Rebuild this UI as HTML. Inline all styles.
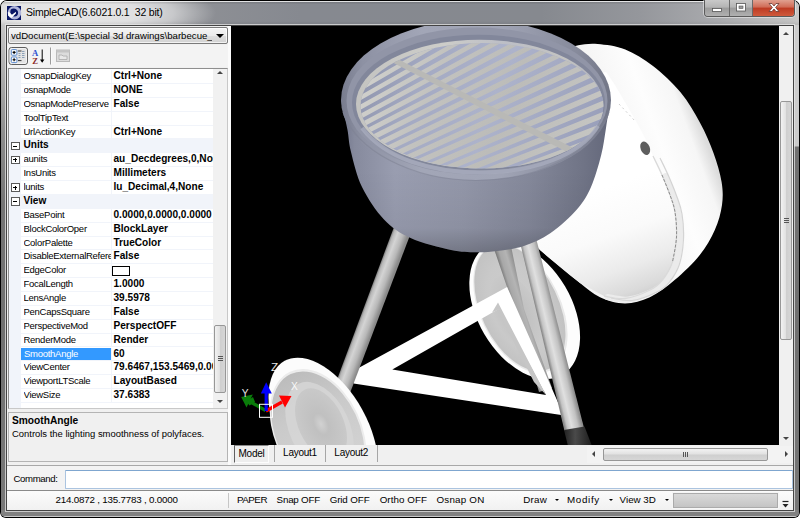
<!DOCTYPE html>
<html lang="en">
<head>
<meta charset="utf-8">
<title>SimpleCAD</title>
<style>
*{box-sizing:border-box;margin:0;padding:0}
html,body{width:800px;height:521px;overflow:hidden;background:#fff}
body{position:relative;font-family:"Liberation Sans",sans-serif;font-size:9.6px;color:#000}
.abs{position:absolute}
#win{position:absolute;left:0;top:0;width:800px;height:518px;border-radius:7px 7px 6px 6px;background:#000;overflow:hidden}
#frame{position:absolute;left:1px;top:1px;right:1px;bottom:1px;border-radius:6px 6px 5px 5px;background:#7b7b7b;overflow:hidden;box-shadow:inset 0 0 0 1px rgba(255,255,255,.55)}
#tbar{position:absolute;left:0;top:0;right:0;height:24px;overflow:hidden;background:linear-gradient(90deg,#a6a6a6 0,#8e9095 190px,#868990 300px,#86898f 540px,#95979c 640px,#aaabae 720px,#c2c2c2 790px,#c8c8c8 100%)}
#tglow{position:absolute;left:-70px;top:-22px;width:285px;height:68px;background:radial-gradient(ellipse closest-side at center,rgba(255,255,255,.74) 0,rgba(255,255,255,.7) 45%,rgba(255,255,255,.5) 70%,rgba(255,255,255,.2) 88%,rgba(255,255,255,0) 100%)}
#tbshine{position:absolute;left:0;top:0;right:0;height:24px;background:linear-gradient(180deg,rgba(0,0,0,.10) 0,rgba(0,0,0,.10) 2px,rgba(0,0,0,0) 3px,rgba(0,0,0,0) 20px,rgba(0,0,0,.08) 100%);box-shadow:inset 0 1px 0 rgba(255,255,255,.78)}
#lside{position:absolute;left:0;top:24px;width:6px;bottom:0;background:linear-gradient(180deg,#c6c6c6 0,#b0b0b0 40px,#8c8c8c 110px,#747474 180px,#707070 300px,#787878 100%)}
#rside{position:absolute;right:0;top:24px;width:6px;bottom:0;background:linear-gradient(180deg,#cdcdcd 0,#cbcbcb 121px,#727272 122px,#707070 300px,#787878 100%)}
#bside{position:absolute;left:0;right:0;bottom:0;height:7px;background:#818181;border-bottom:1px solid #c9c9c9}
#inner{position:absolute;left:6px;top:25px;width:788px;height:486px;background:#444;box-shadow:0 0 0 1px rgba(232,232,232,.72)}
#client{position:absolute;left:7px;top:26px;width:786px;height:484px;background:#f0f0f0;overflow:hidden}
#title{position:absolute;left:26px;top:5px;font-size:10.5px;letter-spacing:-.2px;line-height:14px;white-space:nowrap;color:#000;text-shadow:0 0 4px rgba(255,255,255,.5)}
#appicon{position:absolute;left:6px;top:5px;width:16px;height:16px;background:#e4e4e4}
/* caption buttons */
#cap{position:absolute;left:704px;top:0;width:91px;height:17px;border:1px solid #5a5a5a;border-top:none;border-radius:0 0 4px 4px;overflow:hidden;box-shadow:0 0 0 1px rgba(255,255,255,.45)}
#cap div{position:absolute;top:0;height:16px}
#bmin{left:0;width:25px;background:linear-gradient(180deg,#c9c9c9 0,#b4b4b4 45%,#9b9b9b 50%,#b0b0b0 100%);border-right:1px solid #6a6a6a}
#bmax{left:25px;width:23px;background:linear-gradient(180deg,#c9c9c9 0,#b4b4b4 45%,#9b9b9b 50%,#b0b0b0 100%);border-right:1px solid #6a6a6a}
#bcls{left:48px;width:42px;background:linear-gradient(180deg,#e0a090 0,#d06a55 45%,#bd3a22 50%,#cf5a3c 100%)}
/* left panel */
#lp{position:absolute;left:0;top:0;width:221px;height:439px;background:#f0f0f0}
#combo{position:absolute;left:1px;top:1px;width:220px;height:17px;border:1px solid #7a7a7a;border-radius:2px;background:linear-gradient(180deg,#f4f4f4 0,#ebebeb 50%,#dedede 52%,#d2d2d2 100%);box-shadow:inset 0 0 0 1px rgba(255,255,255,.7)}
#combo span{position:absolute;left:2px;top:1.5px;font-size:9.65px;line-height:12px;white-space:nowrap;width:201px;overflow:hidden}
#combo i{position:absolute;right:3.5px;top:6px;width:0;height:0;border:4px solid transparent;border-top:4.5px solid #000;border-bottom:0}
#tb{position:absolute;left:0;top:19px;width:222px;height:22px;background:#f3f3f3}
#grid{position:absolute;left:1px;top:41.5px;width:220px;height:341px;background:#fff;border:1px solid #9a9a9a;border-color:#8e8e8e #c8c8c8 #c8c8c8 #8e8e8e;overflow:hidden}
#gut{position:absolute;left:0;top:0;width:11.5px;height:100%;background:#f1f4fa}
.r{position:absolute;left:0;width:204px;height:13.87px;border-bottom:1px solid #f1f4fa;white-space:nowrap}
.r .n{position:absolute;left:14.5px;top:0;width:87px;height:13px;line-height:12.6px;overflow:hidden;font-size:9.5px;letter-spacing:-.27px;padding-left:0}
.r .v{position:absolute;left:102px;top:0;width:102.5px;height:13px;line-height:12.6px;overflow:hidden;font-weight:bold;font-size:10.1px;padding-left:1.5px;border-left:1px solid #f1f4fa}
.r.cat{background:#f1f4fa}
.r.cat .n{font-weight:bold;overflow:visible;font-size:10.1px;letter-spacing:0}
.r.cat .v{border-left:none}
.r.sel .n{background:#3399ff;color:#fff;left:11.5px;padding-left:3.5px;width:90px;height:12.8px}
.bx{position:absolute;left:1.5px;top:2.2px;width:9px;height:8.8px;border:1px solid #5a5a5a;background:#fff}
.bx:before{content:"";position:absolute;left:1.5px;top:2.9px;width:4px;height:1px;background:#000}
.bx:after{content:"";position:absolute;left:3px;top:1.4px;width:1px;height:4px;background:#000}
.bx.m:after{display:none}
.sw{position:absolute;left:0px;top:1.8px;width:17.5px;height:9.5px;border:1px solid #000;background:#fff}
#gsb{position:absolute;left:204px;top:0;width:14px;height:100%;background:#f1f1f1}
#gthumb{position:absolute;left:1px;top:256px;width:12px;height:68.5px;border:1px solid #979797;border-radius:2px;background:linear-gradient(90deg,#f2f2f2 0,#e2e2e2 45%,#cfcfcf 55%,#d6d6d6 100%)}
.grip{position:absolute;left:2.5px;width:5px;height:1px;background:#555}
.arr{position:absolute;width:0;height:0;border:3px solid transparent}
#desc{position:absolute;left:0.5px;top:385.5px;width:220.5px;height:50.5px;border:1px solid #b4b4b4;background:#f0f0f0}
#desc b{position:absolute;left:3.5px;top:2px;font-size:10.2px;line-height:12px}
#desc span{position:absolute;left:3.5px;top:15.5px;font-size:9.43px;line-height:12px;white-space:nowrap}
/* viewport */
#vp{position:absolute;left:224px;top:0;width:548px;height:419px;background:#000;overflow:hidden}
#vsb{position:absolute;left:772px;top:0;width:14px;height:419px;background:#f0f0f0}
#vthumb{position:absolute;left:.5px;top:74.5px;width:12.5px;height:239px;border:1px solid #979797;border-radius:2px;background:linear-gradient(90deg,#f2f2f2 0,#e2e2e2 45%,#cfcfcf 55%,#d6d6d6 100%)}
#tabs{position:absolute;left:225px;top:419px;width:561px;height:19px;background:#f0f0f0}
.tab{position:absolute;top:0;height:17px;font-size:10px;letter-spacing:-.25px;line-height:16px;text-align:center;border:1px solid #9a9a9a;border-top:none;background:#f3f3f3}
#hsb{position:absolute;left:355px;top:1px;width:206px;height:16.5px;background:#f3f3f3}
#hthumb{position:absolute;left:16px;top:1.5px;width:164.5px;height:13px;border:1px solid #979797;border-radius:2px;background:linear-gradient(180deg,#f2f2f2 0,#e2e2e2 45%,#cfcfcf 55%,#d6d6d6 100%)}
/* command */
#sepline{position:absolute;left:0;top:438.5px;width:786px;height:1px;background:#a8a8a8}
#cmd{position:absolute;left:0;top:440px;width:786px;height:24px;background:#f3f3f3}
#cmd span{position:absolute;left:6.5px;top:6.5px;font-size:9.6px;letter-spacing:-.35px;line-height:12px}
#cmd div{position:absolute;left:57.5px;top:4px;width:728px;height:18.5px;border:1px solid #abc4e0;border-top-color:#7fa6cf;background:#fff;border-radius:1px}
#status{position:absolute;left:0;top:464px;width:786px;height:20px;background:linear-gradient(180deg,#fbfbfb 0,#f1f1f1 100%);border-top:1px solid #8a8a8a}
#status span{position:absolute;top:3px;font-size:9.8px;line-height:12px;white-space:nowrap}
#prog{position:absolute;left:666px;top:1.5px;width:105px;height:15.5px;border:1px solid #ababab;background:linear-gradient(180deg,#d9d9d9 0,#cfcfcf 50%,#c4c4c4 100%);box-shadow:0 0 0 1px #f6f6f6}
.dd{position:absolute;top:8px;width:0;height:0;border:2.2px solid transparent;border-top:2.6px solid #000;border-bottom:0}
</style>
</head>
<body>
<div id="win">
 <div id="frame"><div id="lside"></div><div id="rside"></div><div id="bside"></div><div id="tbar"><div id="tglow"></div></div><div id="tbshine"></div></div>
 <div id="appicon">
  <svg width="16" height="16" viewBox="0 0 16 16"><rect x="1" y="1" width="14" height="14" fill="#0a1766"/><circle cx="8.500" cy="7.800" r="5.200" fill="none" stroke="#b0b5da" stroke-width="3.200"/><circle cx="7.600" cy="6.900" r="3.300" fill="#0a1766"/><path d="M2 7 L3.600 7.500 L5.900 9.800 L10 6.800 L9.900 8.500 L5.500 12.900 L2.200 10.800Z" fill="#fff"/></svg>
 </div>
 <div id="title">SimpleCAD(6.6021.0.1&nbsp; 32 bit)</div>
 <div id="cap">
  <div id="bmin"><svg width="25" height="16"><rect x="7.5" y="8.5" width="9" height="3" fill="#fff" stroke="#555" stroke-width=".8"/></svg></div>
  <div id="bmax"><svg width="23" height="16"><rect x="6.5" y="3.5" width="9" height="7.5" fill="#fff" stroke="#555" stroke-width=".8"/><rect x="9" y="6" width="4" height="2.5" fill="#9a9a9a" stroke="#555" stroke-width=".6"/></svg></div>
  <div id="bcls"><svg width="42" height="16"><path d="M16 3.5 L19 3.5 L21 6 L23 3.5 L26 3.5 L22.6 7.5 L26 11.5 L23 11.5 L21 9 L19 11.5 L16 11.5 L19.4 7.5Z" fill="#fff" stroke="#6a3a34" stroke-width=".8"/></svg></div>
 </div>
 <div id="inner"></div>
 <div id="client">
  <div id="lp">
   <div id="combo"><span>vdDocument(E:\special 3d drawings\barbecue_3</span><i></i></div>
   <div id="tb">
    <svg width="80" height="22" viewBox="0 0 80 22">
     <rect x="2" y="2.5" width="18.5" height="17" rx="2.5" fill="#e3e3e3" stroke="#5e5e5e" stroke-width="1"/>
     <rect x="3" y="3.5" width="16.5" height="15" rx="2" fill="none" stroke="#f8f8f8" stroke-width=".8"/>
     <rect x="4.3" y="4.6" width="5.6" height="5.6" rx="1" fill="#fff" stroke="#5a8ad0" stroke-width="1"/>
     <rect x="4.3" y="12" width="5.6" height="5.6" rx="1" fill="#fff" stroke="#5a8ad0" stroke-width="1"/>
     <path d="M5.6 7.4h3M7.1 5.9v3M5.6 14.8h3M7.1 13.3v3" stroke="#000" stroke-width="1.1"/>
     <path d="M11 6h3.5M11 15.6h3.5" stroke="#333" stroke-width="1"/>
     <path d="M11.5 8.5h2M15 8.500h2.500M11.5 10.5h2M15 10.500h2.500M11.5 12.500h2M15 12.500h2.500M15 6.500h2.500" stroke="#8aa0b8" stroke-width="1"/>
     <text x="25" y="11" font-family="Liberation Serif,serif" font-weight="bold" font-size="8.600" fill="#2a4fd0">A</text>
     <text x="25.300" y="18.500" font-family="Liberation Serif,serif" font-weight="bold" font-size="8.600" fill="#8c2a2a">Z</text>
     <path d="M35.2 4.5v12" stroke="#000" stroke-width="1"/><path d="M33 14.500h4.400l-2.200 3.300z" fill="#000"/>
     <rect x="43" y="2.5" width="1" height="17" fill="#9c9c9c"/><rect x="44" y="2.5" width="1" height="17" fill="#fafafa"/>
     <rect x="49.500" y="5" width="13" height="11.500" fill="#dcdcdc" stroke="#b9b9b9" stroke-width="1"/>
     <rect x="49.500" y="5" width="13" height="2.500" fill="#c4c4c4"/>
     <path d="M52 12.500v-2.500h3l1 1h4v3.500h-8z" fill="#e8e8e8" stroke="#b0b0b0" stroke-width=".9"/>
    </svg>
   </div>
   <div id="grid">
    <div id="gut"></div>
<div class="r" style="top:1.60px"><span class="n">OsnapDialogKey</span><span class="v">Ctrl+None</span></div>
<div class="r" style="top:15.47px"><span class="n">osnapMode</span><span class="v">NONE</span></div>
<div class="r" style="top:29.34px"><span class="n">OsnapModePreserve</span><span class="v">False</span></div>
<div class="r" style="top:43.21px"><span class="n">ToolTipText</span><span class="v"></span></div>
<div class="r" style="top:57.08px"><span class="n">UrlActionKey</span><span class="v">Ctrl+None</span></div>
<div class="r cat" style="top:70.95px"><i class="bx m"></i><span class="n">Units</span><span class="v"></span></div>
<div class="r" style="top:84.82px"><i class="bx"></i><span class="n">aunits</span><span class="v">au_Decdegrees,0,None</span></div>
<div class="r" style="top:98.69px"><span class="n">InsUnits</span><span class="v">Millimeters</span></div>
<div class="r" style="top:112.56px"><i class="bx"></i><span class="n">lunits</span><span class="v">lu_Decimal,4,None</span></div>
<div class="r cat" style="top:126.43px"><i class="bx m"></i><span class="n">View</span><span class="v"></span></div>
<div class="r" style="top:140.30px"><span class="n">BasePoint</span><span class="v">0.0000,0.0000,0.0000</span></div>
<div class="r" style="top:154.17px"><span class="n">BlockColorOper</span><span class="v">BlockLayer</span></div>
<div class="r" style="top:168.04px"><span class="n">ColorPalette</span><span class="v">TrueColor</span></div>
<div class="r" style="top:181.91px"><span class="n">DisableExternalReferences</span><span class="v">False</span></div>
<div class="r" style="top:195.78px"><span class="n">EdgeColor</span><span class="v"><i class="sw"></i></span></div>
<div class="r" style="top:209.65px"><span class="n">FocalLength</span><span class="v">1.0000</span></div>
<div class="r" style="top:223.52px"><span class="n">LensAngle</span><span class="v">39.5978</span></div>
<div class="r" style="top:237.39px"><span class="n">PenCapsSquare</span><span class="v">False</span></div>
<div class="r" style="top:251.26px"><span class="n">PerspectiveMod</span><span class="v">PerspectOFF</span></div>
<div class="r" style="top:265.13px"><span class="n">RenderMode</span><span class="v">Render</span></div>
<div class="r sel" style="top:279.00px"><span class="n">SmoothAngle</span><span class="v">60</span></div>
<div class="r" style="top:292.87px"><span class="n">ViewCenter</span><span class="v">79.6467,153.5469,0.0000</span></div>
<div class="r" style="top:306.74px"><span class="n">ViewportLTScale</span><span class="v">LayoutBased</span></div>
<div class="r" style="top:320.61px"><span class="n">ViewSize</span><span class="v">37.6383</span></div>
    <div id="gsb">
     <div class="arr" style="left:4.200px;top:2px;border-bottom:3.500px solid #444;border-top:0"></div>
     <div id="gthumb"><i class="grip" style="top:30.5px"></i><i class="grip" style="top:32.5px"></i><i class="grip" style="top:34.5px"></i></div>
     <div class="arr" style="left:4.200px;top:331px;border-top:3.500px solid #444;border-bottom:0"></div>
    </div>
   </div>
   <div id="desc"><b>SmoothAngle</b><span>Controls the lighting smoothness of polyfaces.</span></div>
  </div>
  <div class="abs" style="left:221px;top:0;width:3px;height:439px;background:#fbfbfb"></div>
  <div id="vp">
<svg id="scene" width="548" height="419" viewBox="231 26 548 419">
<defs>
<linearGradient id="gBowl" x1="341" y1="0" x2="610" y2="0" gradientUnits="userSpaceOnUse">
<stop offset="0" stop-color="#70748a"/><stop offset=".05" stop-color="#868a9d"/><stop offset=".2" stop-color="#999db0"/><stop offset=".45" stop-color="#9397a9"/><stop offset=".7" stop-color="#84889a"/><stop offset=".9" stop-color="#707486"/><stop offset="1" stop-color="#63677a"/></linearGradient>
<linearGradient id="gBowlV" x1="0" y1="170" x2="0" y2="253" gradientUnits="userSpaceOnUse">
<stop offset="0" stop-color="#000" stop-opacity="0"/><stop offset=".7" stop-color="#000" stop-opacity=".05"/><stop offset="1" stop-color="#000" stop-opacity=".22"/></linearGradient>
<linearGradient id="gRim" x1="341" y1="0" x2="610" y2="0" gradientUnits="userSpaceOnUse">
<stop offset="0" stop-color="#787c8e"/><stop offset=".08" stop-color="#8d91a3"/><stop offset=".3" stop-color="#a2a6b7"/><stop offset=".6" stop-color="#a0a4b5"/><stop offset=".88" stop-color="#868a9b"/><stop offset="1" stop-color="#727687"/></linearGradient>
<linearGradient id="gGrate" x1="360" y1="60" x2="600" y2="150" gradientUnits="userSpaceOnUse">
<stop offset="0" stop-color="#8c92aa"/><stop offset=".25" stop-color="#a4aac3"/><stop offset=".55" stop-color="#adb3cb"/><stop offset="1" stop-color="#989eb9"/></linearGradient>
<linearGradient id="gBars" x1="360" y1="60" x2="600" y2="150" gradientUnits="userSpaceOnUse">
<stop offset="0" stop-color="#d2d2ce"/><stop offset=".3" stop-color="#c2c2bf"/><stop offset=".6" stop-color="#bcbcb9"/><stop offset="1" stop-color="#c6c6c3"/></linearGradient>
<linearGradient id="gLeg" x1="394" y1="227" x2="409" y2="232.600" gradientUnits="userSpaceOnUse"><stop offset="0" stop-color="#7e7e7e"/><stop offset=".12" stop-color="#b8b8b8"/><stop offset=".35" stop-color="#d4d4d4"/><stop offset=".7" stop-color="#b8b8b8"/><stop offset="1" stop-color="#8a8a8a"/></linearGradient>
<linearGradient id="gLegR" x1="519.500" y1="240" x2="536.500" y2="235.900" gradientUnits="userSpaceOnUse"><stop offset="0" stop-color="#8a8a8a"/><stop offset=".15" stop-color="#c4c4c4"/><stop offset=".4" stop-color="#e0e0e0"/><stop offset=".75" stop-color="#c2c2c2"/><stop offset="1" stop-color="#8e8e8e"/></linearGradient>
<linearGradient id="gLegB" x1="493" y1="246" x2="509.500" y2="241" gradientUnits="userSpaceOnUse"><stop offset="0" stop-color="#747474"/><stop offset=".25" stop-color="#a8a8a8"/><stop offset=".6" stop-color="#b4b4b4"/><stop offset="1" stop-color="#888888"/></linearGradient>
<linearGradient id="gFoot" x1="0" y1="0" x2="1" y2="0">
<stop offset="0" stop-color="#222"/><stop offset=".4" stop-color="#4a4a4a"/><stop offset="1" stop-color="#1c1c1c"/></linearGradient>
<radialGradient id="gFace" cx=".5" cy=".5" r=".6"><stop offset="0" stop-color="#cecece"/><stop offset=".6" stop-color="#c9c9c9"/><stop offset="1" stop-color="#bebebe"/></radialGradient>
<linearGradient id="gFace2" x1="0" y1="0" x2="1" y2="0"><stop offset="0" stop-color="#bcbcbc"/><stop offset=".35" stop-color="#cacaca"/><stop offset="1" stop-color="#d6d6d6"/></linearGradient>
<radialGradient id="gHub" cx=".5" cy=".5" r=".5"><stop offset="0" stop-color="#d2d2d2"/><stop offset=".3" stop-color="#c0c0c0"/><stop offset="1" stop-color="#c9c9c9"/></radialGradient>
<linearGradient id="gLid" x1="600" y1="120" x2="700" y2="290" gradientUnits="userSpaceOnUse">
<stop offset="0" stop-color="#fff"/><stop offset=".7" stop-color="#fbfbfb"/><stop offset="1" stop-color="#e9e9e9"/></linearGradient>
<linearGradient id="gLidBand" x1="640" y1="215" x2="722" y2="185" gradientUnits="userSpaceOnUse">
<stop offset="0" stop-color="#f4f4f4"/><stop offset=".5" stop-color="#fdfdfd"/><stop offset=".85" stop-color="#f6f6f6"/><stop offset="1" stop-color="#dcdcdc"/></linearGradient>
<linearGradient id="gLidIn" x1="612" y1="185" x2="652" y2="296" gradientUnits="userSpaceOnUse">
<stop offset="0" stop-color="#fff"/><stop offset=".4" stop-color="#fafafa"/><stop offset=".7" stop-color="#ebebeb"/><stop offset=".9" stop-color="#dadada"/><stop offset="1" stop-color="#cacaca"/></linearGradient>
<clipPath id="cGrate"><ellipse cx="482" cy="105.800" rx="121.500" ry="62.700"/></clipPath>
<linearGradient id="gWall" x1="360" y1="0" x2="600" y2="0" gradientUnits="userSpaceOnUse"><stop offset="0" stop-color="#c4c4c1"/><stop offset=".35" stop-color="#cdcdc9"/><stop offset=".6" stop-color="#bcbec6"/><stop offset=".85" stop-color="#c4c4c2"/><stop offset="1" stop-color="#b0b3bf"/></linearGradient>
<clipPath id="cInner"><ellipse cx="479" cy="103" rx="124.500" ry="65.500"/></clipPath>
</defs>
<rect x="231" y="26" width="548" height="419" fill="#000"/>
<ellipse cx="524.7" cy="310.3" rx="74.7" ry="46.9" fill="#fdfdfd" transform="rotate(59.6 524.7 310.3)"/>
<ellipse cx="520.4" cy="308.400" rx="69" ry="40.300" fill="#e9e9e9" transform="rotate(64 520.4 308.400)"/>
<ellipse cx="519.9" cy="307.9" rx="67.5" ry="38.8" fill="url(#gFace)" transform="rotate(64.4 519.9 307.9)"/>
<ellipse cx="516" cy="312" rx="40" ry="22" fill="url(#gHub)" transform="rotate(64.4 516 312)"/>
<path d="M566.0 50.0C568.0 49.2 573.0 46.3 578.3 45.3C583.6 44.3 589.8 43.3 597.6 44.0C605.4 44.7 616.1 45.8 625.3 49.5C634.5 53.2 643.8 58.9 653.0 66.0C662.2 73.1 672.7 82.8 680.5 92.3C688.3 101.8 694.5 112.6 700.0 122.7C705.5 132.8 709.9 143.1 713.5 153.0C717.1 162.9 720.2 173.3 721.6 182.0C723.0 190.7 723.1 197.0 722.0 205.0C720.9 213.0 718.5 221.7 714.8 230.0C711.1 238.3 706.4 246.6 699.8 254.9C693.1 263.2 683.2 272.7 674.9 279.8C666.6 286.9 658.2 293.4 649.9 297.3C641.6 301.2 633.3 303.5 625.0 303.5C616.7 303.5 607.5 300.7 600.0 297.3C592.5 293.9 586.7 288.1 580.0 283.0C573.3 277.9 566.7 272.5 560.0 267.0C553.3 261.5 545.3 254.8 540.0 250.0C534.7 245.2 530.0 240.0 528.0 238.0 L520 200 L560 80 Z" fill="url(#gLidBand)"/>
<path d="M606.0 72.0C607.2 73.7 610.3 77.8 613.0 82.0C615.7 86.2 618.7 91.3 622.0 97.0C625.3 102.7 629.2 109.2 633.0 116.0C636.8 122.8 641.7 131.3 645.0 138.0C648.3 144.7 650.2 149.8 653.0 156.0C655.8 162.2 659.2 168.5 662.0 175.0C664.8 181.5 667.8 188.8 670.0 195.0C672.2 201.2 673.9 205.0 675.0 212.0C676.1 219.0 676.9 228.7 676.5 237.0C676.1 245.3 674.8 254.8 672.5 262.0C670.2 269.2 666.2 275.3 662.5 280.0C658.8 284.7 656.2 286.9 650.0 290.0C643.8 293.1 632.7 297.5 625.0 298.5C617.3 299.5 607.5 296.4 604.0 296.0 L580 283 L540 250 L520 200 L560 80 Z" fill="url(#gLidIn)"/>
<path d="M662.0 175.0C663.3 178.3 667.8 188.8 670.0 195.0C672.2 201.2 673.9 205.0 675.0 212.0C676.1 219.0 676.9 228.7 676.5 237.0C676.1 245.3 674.8 254.8 672.5 262.0C670.2 269.2 666.2 275.3 662.5 280.0C658.8 284.7 656.2 286.9 650.0 290.0C643.8 293.1 632.7 297.5 625.0 298.5C617.3 299.5 607.5 296.4 604.0 296.0" fill="none" stroke="#ebebeb" stroke-width="6" transform="translate(3.500 1)" stroke-linecap="round"/>
<path d="M653.0 156.0C654.5 159.2 659.2 168.5 662.0 175.0C664.8 181.5 667.8 188.8 670.0 195.0C672.2 201.2 673.9 205.0 675.0 212.0C676.1 219.0 676.9 228.7 676.5 237.0C676.1 245.3 674.8 254.8 672.5 262.0C670.2 269.2 666.2 275.3 662.5 280.0C658.8 284.7 656.2 286.9 650.0 290.0C643.8 293.1 632.7 297.5 625.0 298.5C617.3 299.5 607.5 296.4 604.0 296.0" fill="none" stroke="#d4d4d4" stroke-width="1.200" transform="translate(7 2)"/>
<path d="M653.0 156.0C654.5 159.2 659.2 168.5 662.0 175.0C664.8 181.5 667.8 188.8 670.0 195.0C672.2 201.2 673.9 205.0 675.0 212.0C676.1 219.0 676.9 228.7 676.5 237.0C676.1 245.3 674.8 254.8 672.5 262.0C670.2 269.2 666.2 275.3 662.5 280.0C658.8 284.7 656.2 286.9 650.0 290.0C643.8 293.1 632.7 297.5 625.0 298.5C617.3 299.5 607.5 296.4 604.0 296.0" fill="none" stroke="#dadada" stroke-width="1.300"/>
<path d="M662.0 175.0C663.3 178.3 667.8 188.8 670.0 195.0C672.2 201.2 673.9 205.0 675.0 212.0C676.1 219.0 676.9 228.7 676.5 237.0C676.1 245.3 673.2 257.8 672.5 262.0" fill="none" stroke="#8c8c8c" stroke-width="1" stroke-dasharray="3 1.500"/>
<path d="M619 104 L636 122" stroke="#cfcfcf" stroke-width="1" stroke-dasharray="2 3"/>
<ellipse cx="645.2" cy="148.2" rx="4.600" ry="7" transform="rotate(-22 645.2 148.2)" fill="#5e5e5e"/>
<path d="M493 246 L511 246 L524 309 L552 388 L539 392 L513.500 306 Z" fill="url(#gLegB)"/>
<path d="M353.5 372.500 L357.6 368.400 L507.1 286.900 L562.9 413.500 L562.9 415.200 L353.500 383.600 Z M392.3 369.600 L546 395 L499.5 308.500 Z" fill="#fff" fill-rule="evenodd"/>
<path d="M498 302.500 L492 312.500 L499.800 309 L500.500 316 L534 382 L546 395 Z" fill="#c6c6c6"/>
<path d="M394 227 L409.500 236.500 L350 393 L335 385 Z" fill="url(#gLeg)"/>
<path d="M519.500 240 L536.500 240 L584 428 L564.500 431 Z" fill="url(#gLegR)"/>
<path d="M564 430 L584.500 426.500 L592 446 L568 446 Z" fill="url(#gFoot)"/>
<path d="M341.0 100.0C341.4 102.0 342.4 107.0 343.5 112.0C344.6 117.0 346.2 123.3 347.5 130.0C348.8 136.7 348.6 142.5 351.0 152.0C353.4 161.5 356.5 175.8 362.0 187.0C367.5 198.2 375.9 211.0 384.0 219.5C392.1 228.0 399.4 232.9 410.6 238.0C421.8 243.1 440.1 247.6 451.0 250.0C461.9 252.4 468.3 252.1 476.0 252.3C483.7 252.5 489.0 252.1 497.0 251.0C505.0 249.9 514.9 249.0 523.8 246.0C532.7 243.0 541.6 239.2 550.6 233.0C559.6 226.8 570.8 216.4 577.5 208.7C584.2 201.0 587.0 195.9 591.0 187.0C595.0 178.1 598.7 164.8 601.2 155.0C603.7 145.2 604.5 137.2 606.0 128.0C607.5 118.8 609.3 104.7 610.0 100.0 Z" fill="url(#gBowl)"/>
<path d="M341.0 100.0C341.4 102.0 342.4 107.0 343.5 112.0C344.6 117.0 346.2 123.3 347.5 130.0C348.8 136.7 348.6 142.5 351.0 152.0C353.4 161.5 356.5 175.8 362.0 187.0C367.5 198.2 375.9 211.0 384.0 219.5C392.1 228.0 399.4 232.9 410.6 238.0C421.8 243.1 440.1 247.6 451.0 250.0C461.9 252.4 468.3 252.1 476.0 252.3C483.7 252.5 489.0 252.1 497.0 251.0C505.0 249.9 514.9 249.0 523.8 246.0C532.7 243.0 541.6 239.2 550.6 233.0C559.6 226.8 570.8 216.4 577.5 208.7C584.2 201.0 587.0 195.9 591.0 187.0C595.0 178.1 598.7 164.8 601.2 155.0C603.7 145.2 604.5 137.2 606.0 128.0C607.5 118.8 609.3 104.7 610.0 100.0 Z" fill="url(#gBowlV)"/>
<ellipse cx="476" cy="100" rx="135" ry="80" fill="url(#gRim)"/>
<path d="M343 112 C356 150 410 180 476 180.500 C542 180 597 150 609 112" fill="none" stroke="#7d8193" stroke-width="1.200" opacity=".55"/>
<ellipse cx="477" cy="101" rx="130.500" ry="73.500" fill="#9195a7"/>
<ellipse cx="478.500" cy="102.500" rx="126.500" ry="67.800" fill="#82879b"/>
<ellipse cx="479.500" cy="104" rx="123.500" ry="64.300" fill="url(#gWall)"/>
<g clip-path="url(#cGrate)">
<rect x="350" y="36" width="262" height="140" fill="url(#gGrate)"/>
<path d="M330 85.45L630 -96.26L630 -91.32L330 90.40ZM330 94.49L630 -83.37L630 -78.34L330 99.51ZM330 103.49L630 -70.51L630 -65.41L330 108.59ZM330 112.43L630 -57.71L630 -52.53L330 117.61ZM330 121.32L630 -44.97L630 -39.71L330 126.58ZM330 130.14L630 -32.29L630 -26.95L330 135.48ZM330 138.90L630 -19.67L630 -14.26L330 144.31ZM330 147.58L630 -7.14L630 -1.64L330 153.07ZM330 156.17L630 5.32L630 10.89L330 161.75ZM330 164.68L630 17.68L630 23.33L330 170.33ZM330 173.09L630 29.95L630 35.68L330 178.82ZM330 181.40L630 42.12L630 47.92L330 187.21ZM330 189.60L630 54.18L630 60.06L330 195.49ZM330 197.69L630 66.12L630 72.08L330 203.65ZM330 205.65L630 77.94L630 83.98L330 211.70ZM330 213.49L630 89.63L630 95.75L330 219.61ZM330 221.19L630 101.19L630 107.39L330 227.39ZM330 228.75L630 112.61L630 118.89L330 235.03ZM330 236.16L630 123.88L630 130.23L330 242.52ZM330 243.42L630 134.99L630 141.43L330 249.86ZM330 250.52L630 145.94L630 152.46L330 257.03Z" fill="url(#gBars)"/>
<path d="M340 29.81L620 171.61L620 179.21L340 35.41Z" fill="#b9b9b6"/>
</g>
<path d="M362 128 C385 158 430 172.500 481 172.500 C532 172.500 580 156 598 126" fill="none" stroke="#a9adbf" stroke-width="4" opacity=".75"/>
<ellipse cx="323.3" cy="430.9" rx="80" ry="44.4" fill="#fcfcfc" transform="rotate(61.1 323.3 430.9)"/>
<ellipse cx="318" cy="431.500" rx="66" ry="43.300" fill="#ececec" transform="rotate(64.9 318 431.500)"/>
<ellipse cx="317.8" cy="431.9" rx="63.9" ry="41.6" fill="url(#gFace2)" transform="rotate(64.9 317.8 431.9)"/>
<ellipse cx="319.500" cy="428" rx="49" ry="30" fill="#d6d6d6" opacity=".85" transform="rotate(64.9 319.500 428)"/>
<ellipse cx="321" cy="424" rx="38" ry="22.500" fill="url(#gHub)" transform="rotate(64.9 321 424)"/>
<g>
<path d="M265.6 410.500 L251.500 402.500" stroke="#0a7d0a" stroke-width="3.200"/>
<path d="M241.2 397 L252.800 394.500 L246.500 407.500 Z" fill="#0a7d0a"/>
<path d="M246.200 401.500 L253 397 L255 402 L249.500 405.500Z" fill="#0a7d0a"/>
<path d="M266 411 L282 402" stroke="#f00" stroke-width="3.200"/>
<path d="M291.500 396 L279 395.500 L285 407.500 Z" fill="#f00"/>
<path d="M266.200 411 L266.200 392" stroke="#00f" stroke-width="3.200"/>
<path d="M266.200 382.200 L260.800 393.500 L271.800 393.500 Z" fill="#00f"/>
<rect x="259.500" y="404.300" width="13" height="13" fill="none" stroke="#fff" stroke-width="1"/>
<g fill="#fff" font-family="Liberation Sans,sans-serif" font-size="10.200" opacity=".9">
<text x="271" y="371.500" transform="translate(271 371.500) scale(1.150 1) translate(-271 -371.500)" fill="#fff">Z</text>
<text x="291" y="389.500" fill="#fff">X</text>
<text x="241.700" y="397" fill="#fff">Y</text>
</g></g>
</svg>
  </div>
  <div id="vsb">
   <div class="arr" style="left:4px;top:5.500px;border-bottom:3.500px solid #444;border-top:0"></div>
   <div id="vthumb"><i class="grip" style="top:116px;left:3px"></i><i class="grip" style="top:118px;left:3px"></i><i class="grip" style="top:120px;left:3px"></i></div>
   <div class="arr" style="left:4px;top:410.500px;border-top:3.500px solid #444;border-bottom:0"></div>
  </div>
  <div id="tabs">
   <div class="tab" style="left:2px;width:35px;background:#eeeeee;border:none;border-left:1px solid #606060;border-top:1px solid #8a8a8a;border-right:1px solid #fdfdfd;border-bottom:1px solid #fdfdfd;height:17.500px;line-height:16px">Model</div>
   <div class="tab" style="left:42px;width:52px;border:none;border-left:1px solid #a6a6a6;border-right:1px solid #a6a6a6;background:none">Layout1</div>
   <div class="tab" style="left:94px;width:51.500px;border:none;border-right:1px solid #a6a6a6;background:none">Layout2</div>
   <div id="hsb">
    <div class="arr" style="left:5px;top:5px;border-right:3.500px solid #444;border-left:0"></div>
    <div id="hthumb"><i class="grip" style="left:79px;top:3.500px;width:1px;height:5px"></i><i class="grip" style="left:81px;top:3.500px;width:1px;height:5px"></i><i class="grip" style="left:83px;top:3.500px;width:1px;height:5px"></i></div>
    <div class="arr" style="left:197.500px;top:5px;border-left:3.500px solid #444;border-right:0"></div>
   </div>
  </div>
  <div id="sepline"></div>
  <div id="cmd"><span>Command:</span><div></div></div>
  <div id="status">
   <span style="left:48.5px;letter-spacing:-.21px">214.0872 , 135.7783 , 0.0000</span>
   <i class="abs" style="left:221px;top:2px;width:1px;height:15px;background:#c6c6c6"></i>
   <span style="left:229.900px;letter-spacing:-.48px">PAPER</span>
   <span style="left:269.600px;letter-spacing:-.22px">Snap OFF</span>
   <span style="left:322.700px;letter-spacing:-.125px">Grid OFF</span>
   <span style="left:372.700px;letter-spacing:.055px">Ortho OFF</span>
   <span style="left:429.500px;letter-spacing:.21px">Osnap ON</span>
   <span style="left:516.200px;letter-spacing:.22px">Draw</span><i class="dd" style="left:548px"></i>
   <span style="left:560px;letter-spacing:.68px">Modify</span><i class="dd" style="left:601.500px"></i>
   <span style="left:612.600px">View 3D</span><i class="dd" style="left:658px"></i>
   <div id="prog"></div>
   <svg class="abs" style="left:774px;top:9px" width="9" height="9"><path d="M1.500 1.500h6" stroke="#222" stroke-width="1.200"/><path d="M1.500 4h6l-3 3.500z" fill="#222"/></svg>
  </div>
 </div>
</div>
</body>
</html>
